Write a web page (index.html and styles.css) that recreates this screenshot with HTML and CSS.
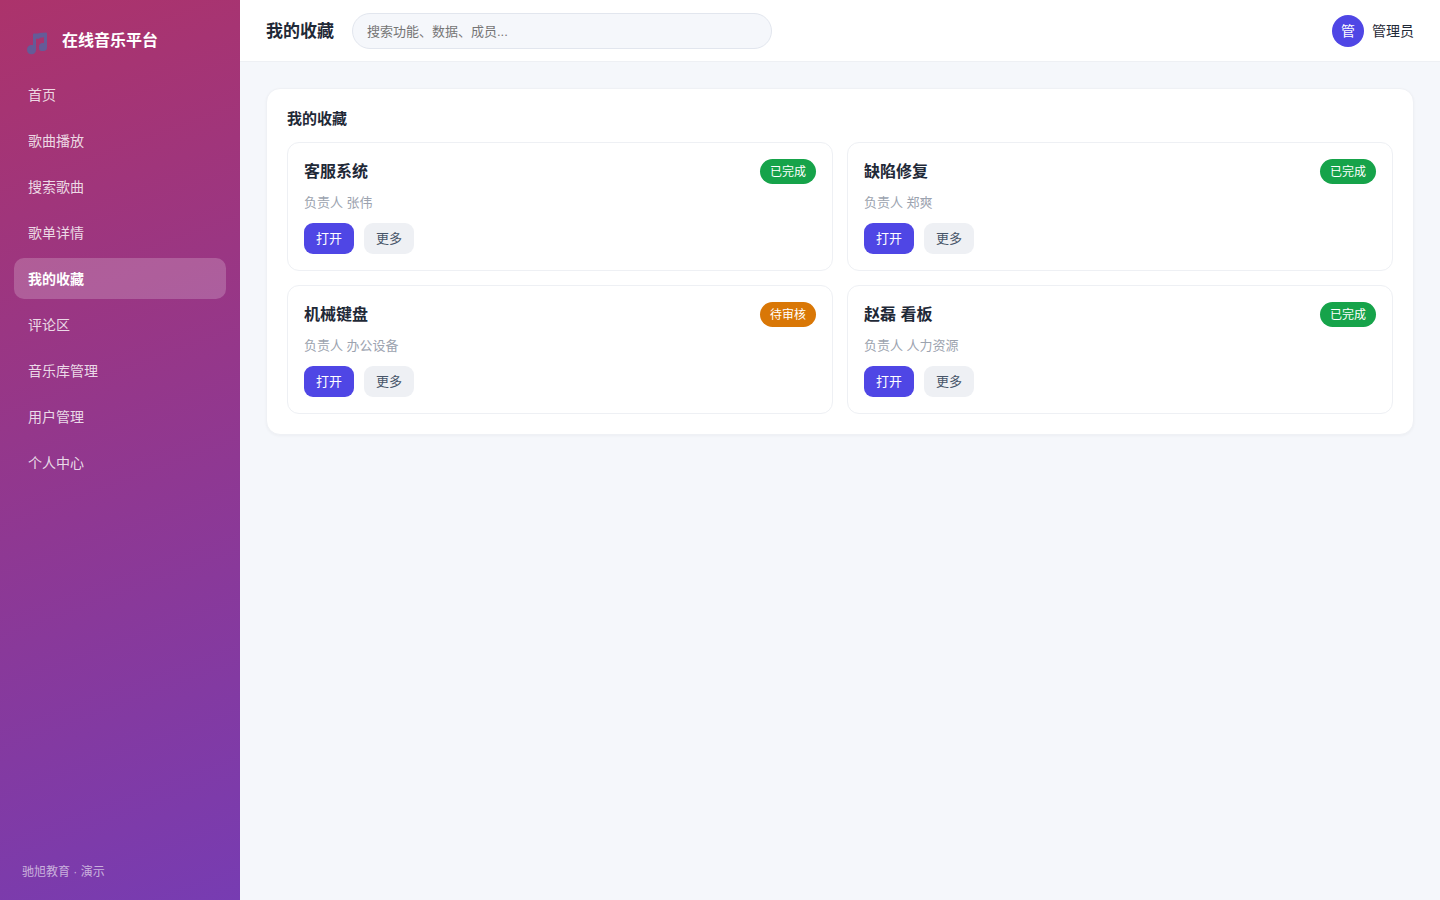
FILE: index.html
```html
<!DOCTYPE html>
<html lang="zh-CN">
<head>
<meta charset="utf-8">
<meta name="viewport" content="width=device-width, initial-scale=1">
<title>我的收藏 - 在线音乐平台</title>
<link rel="stylesheet" href="styles.css">
</head>
<body>
<div class="app">
  <aside class="sidebar">
    <div class="brand">
      <svg class="brand-icon" viewBox="0 0 24 24" aria-hidden="true">
        <path d="M7 5.600Q7 4.700 8 4.600L12 4.600L13.500 4L20 3.400Q21 3.400 21 4.400V18.500Q21 21.600 17.500 22H15Q13 21.600 13 19.500V17.500Q13 14.500 16 14H18V8.200L14 8.800L13 9.700H10V20.500Q10 25 5.500 25.300Q1 25 1 20.500Q1 17 4.500 16H7Z"/>
      </svg>
      <span>在线音乐平台</span>
    </div>
    <nav class="nav">
      <a class="nav-link" href="#">首页</a>
      <a class="nav-link" href="#">歌曲播放</a>
      <a class="nav-link" href="#">搜索歌曲</a>
      <a class="nav-link" href="#">歌单详情</a>
      <a class="nav-link active" href="#" aria-current="page">我的收藏</a>
      <a class="nav-link" href="#">评论区</a>
      <a class="nav-link" href="#">音乐库管理</a>
      <a class="nav-link" href="#">用户管理</a>
      <a class="nav-link" href="#">个人中心</a>
    </nav>
    <div class="sidebar-foot">驰旭教育 · 演示</div>
  </aside>
  <div class="main">
    <header class="topbar">
      <h1 class="page-title">我的收藏</h1>
      <input class="search" type="search" aria-label="搜索" placeholder="搜索功能、数据、成员...">
      <div class="user"><span class="avatar">管</span><span>管理员</span></div>
    </header>
    <main class="content">
      <section class="panel">
        <h2 class="panel-title">我的收藏</h2>
        <div class="grid">
          <article class="card">
            <div class="card-head"><h3 class="card-title">客服系统</h3><span class="badge done">已完成</span></div>
            <p class="owner">负责人 张伟</p>
            <div class="actions"><button class="btn primary" type="button">打开</button><button class="btn" type="button">更多</button></div>
          </article>
          <article class="card">
            <div class="card-head"><h3 class="card-title">缺陷修复</h3><span class="badge done">已完成</span></div>
            <p class="owner">负责人 郑爽</p>
            <div class="actions"><button class="btn primary" type="button">打开</button><button class="btn" type="button">更多</button></div>
          </article>
          <article class="card">
            <div class="card-head"><h3 class="card-title">机械键盘</h3><span class="badge pending">待审核</span></div>
            <p class="owner">负责人 办公设备</p>
            <div class="actions"><button class="btn primary" type="button">打开</button><button class="btn" type="button">更多</button></div>
          </article>
          <article class="card">
            <div class="card-head"><h3 class="card-title">赵磊 看板</h3><span class="badge done">已完成</span></div>
            <p class="owner">负责人 人力资源</p>
            <div class="actions"><button class="btn primary" type="button">打开</button><button class="btn" type="button">更多</button></div>
          </article>
        </div>
      </section>
    </main>
  </div>
</div>
</body>
</html>
```

FILE: styles.css
```css
* { box-sizing: border-box; }

body {
  margin: 0;
  background: #f5f7fb;
  color: #1f2937;
  font-family: "Liberation Sans", "Noto Sans CJK SC", sans-serif;
  font-size: 14px;
  line-height: 20px;
}

h1, h2, h3, p { margin: 0; }

.app {
  display: flex;
  min-height: 100vh;
}

.sidebar {
  display: flex;
  flex-direction: column;
  flex: 0 0 240px;
  padding: 22px 14px 18px;
  background: linear-gradient(160deg, #ac336b, #773cb2);
  color: #fff;
}

.brand {
  display: flex;
  align-items: center;
  gap: 12px;
  padding: 6px 12px 20px;
  font-size: 16px;
  font-weight: 700;
  line-height: 26px;
}

.brand-icon {
  width: 24px;
  height: 24px;
  overflow: visible;
  fill: #655b98;
}

.nav {
  display: flex;
  flex-direction: column;
  gap: 5px;
}

.nav-link {
  padding: 11px 14px 9px;
  border-radius: 10px;
  color: rgba(255, 255, 255, .82);
  line-height: 21px;
  text-decoration: none;
}

.nav-link.active {
  background: rgba(255, 255, 255, .2);
  color: #fff;
  font-weight: 700;
}

.sidebar-foot {
  margin-top: auto;
  padding: 0 8px;
  color: rgba(255, 255, 255, .6);
  font-size: 12px;
}

.main {
  flex: 1;
  min-width: 0;
}

.topbar {
  display: flex;
  align-items: center;
  gap: 18px;
  padding: 13px 26px 12px;
  border-bottom: 1px solid #eef0f4;
  background: #fff;
}

.page-title {
  padding-top: 2px;
  font-size: 17px;
  line-height: 24px;
}

.search {
  flex: 0 1 420px;
  min-width: 0;
  height: 36px;
  padding: 0 14px;
  border: 1px solid #e2e6ee;
  border-radius: 18px;
  background: #f5f7fb;
  color: inherit;
  font: inherit;
  font-size: 13px;
}

.search::placeholder { color: #757575; }

.user {
  display: flex;
  align-items: center;
  gap: 8px;
  margin-left: auto;
}

.avatar {
  display: grid;
  place-items: center;
  width: 32px;
  height: 32px;
  border-radius: 50%;
  background: #4f46e5;
  color: #fff;
}

.content { padding: 26px; }

.panel {
  padding: 20px;
  border: 1px solid #eff1f5;
  border-radius: 14px;
  background: #fff;
  box-shadow: 0 1px 3px rgba(16, 24, 40, .04);
}

.panel-title {
  margin-bottom: 13px;
  font-size: 15px;
  line-height: 20px;
}

.grid {
  display: grid;
  grid-template-columns: repeat(2, minmax(0, 1fr));
  gap: 14px;
}

.card {
  padding: 16px;
  border: 1px solid #eef0f4;
  border-radius: 12px;
}

.card-head {
  display: flex;
  align-items: center;
  justify-content: space-between;
}

.card-title {
  padding-top: 1px;
  font-size: 16px;
  line-height: 24px;
}

.badge {
  padding: 1px 10px 0;
  border-radius: 13px;
  color: #fff;
  font-size: 12px;
  line-height: 24px;
}

.badge.done { background: #16a34a; }
.badge.pending { background: #d97706; }

.owner {
  margin: 9px 0 10px;
  color: #9ca3af;
  font-size: 13px;
}

.actions {
  display: flex;
  gap: 10px;
}

.btn {
  height: 31px;
  padding: 0 12px;
  border: 0;
  border-radius: 9px;
  background: #eef0f4;
  color: #475569;
  font: inherit;
  font-size: 13px;
}

.btn.primary {
  background: #4f46e5;
  color: #fff;
}
```
